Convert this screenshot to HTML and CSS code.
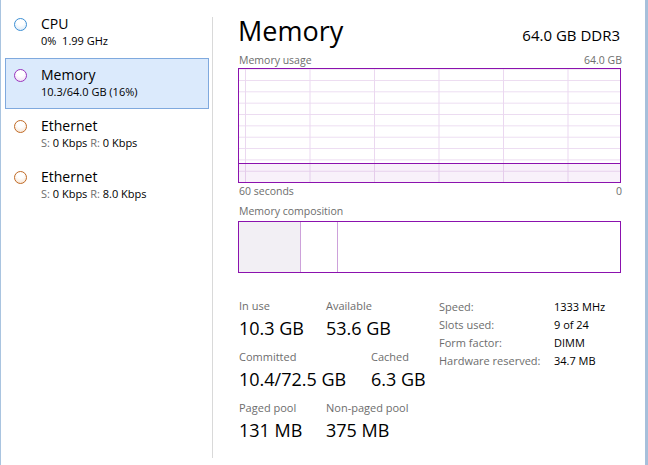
FILE: index.html
```html
<!DOCTYPE html>
<html lang="en">
<head>
    <meta charset="UTF-8">
    <title>Task Manager - Memory</title>
    <link rel="stylesheet" href="styles.css">
</head>
<body>

<div class="window">
    <div class="sidebar">
        <div class="item">
            <span class="dot dot-cpu"></span>
            <div class="item-text">
                <div class="item-title">CPU</div>
                <div class="item-sub">0%&nbsp; 1.99 GHz</div>
            </div>
        </div>
        <div class="item selected">
            <span class="dot dot-mem"></span>
            <div class="item-text">
                <div class="item-title">Memory</div>
                <div class="item-sub">10.3/64.0 GB (16%)</div>
            </div>
        </div>
        <div class="item">
            <span class="dot dot-eth"></span>
            <div class="item-text">
                <div class="item-title">Ethernet</div>
                <div class="item-sub"><span class="dim">S:</span> 0 Kbps <span class="dim">R:</span> 0 Kbps</div>
            </div>
        </div>
        <div class="item">
            <span class="dot dot-eth"></span>
            <div class="item-text">
                <div class="item-title">Ethernet</div>
                <div class="item-sub"><span class="dim">S:</span> 0 Kbps <span class="dim">R:</span> 8.0 Kbps</div>
            </div>
        </div>
    </div>

    <div class="divider"></div>

    <div class="main">
        <div class="header">
            <h1>Memory</h1>
            <div class="spec">64.0 GB DDR3</div>
        </div>

        <div class="graph-labels top">
            <span>Memory usage</span>
            <span>64.0 GB</span>
        </div>
        <div class="usage-graph">
            <div class="usage-fill"></div>
        </div>
        <div class="graph-labels under">
            <span>60 seconds</span>
            <span>0</span>
        </div>

        <div class="graph-labels comp-label">
            <span>Memory composition</span>
        </div>
        <div class="composition">
            <div class="seg seg-used"></div>
            <div class="seg seg-modified"></div>
        </div>

        <div class="stats">
            <div class="stats-left">
                <div class="row">
                    <div class="stat w87">
                        <div class="label">In use</div>
                        <div class="value">10.3 GB</div>
                    </div>
                    <div class="stat">
                        <div class="label">Available</div>
                        <div class="value">53.6 GB</div>
                    </div>
                </div>
                <div class="row">
                    <div class="stat w132">
                        <div class="label">Committed</div>
                        <div class="value">10.4/72.5 GB</div>
                    </div>
                    <div class="stat">
                        <div class="label">Cached</div>
                        <div class="value">6.3 GB</div>
                    </div>
                </div>
                <div class="row">
                    <div class="stat w87">
                        <div class="label">Paged pool</div>
                        <div class="value">131 MB</div>
                    </div>
                    <div class="stat">
                        <div class="label">Non-paged pool</div>
                        <div class="value">375 MB</div>
                    </div>
                </div>
            </div>
            <div class="stats-right">
                <div class="kv"><span class="k">Speed:</span><span class="v">1333 MHz</span></div>
                <div class="kv"><span class="k">Slots used:</span><span class="v">9 of 24</span></div>
                <div class="kv"><span class="k">Form factor:</span><span class="v">DIMM</span></div>
                <div class="kv"><span class="k">Hardware reserved:</span><span class="v">34.7 MB</span></div>
            </div>
        </div>
    </div>

    <div class="edge"></div>
</div>

</body>
</html>
```

FILE: styles.css
```css
html, body {
    margin: 0;
    padding: 0;
    background-color: #fff;
}
body {
    font-family: "Open Sans", "Noto Sans", sans-serif;
    color: #000;
}
.window {
    display: flex;
    width: 648px;
    height: 465px;
    border-left: 1px solid #a9c4e0;
    box-sizing: border-box;
    overflow: hidden;
}

/* left list */
.sidebar {
    width: 211px;
    padding-top: 7px;
    box-sizing: border-box;
}
.item {
    display: flex;
    align-items: flex-start;
    width: 204px;
    height: 51px;
    margin-left: 4px;
    box-sizing: border-box;
    border: 1px solid transparent;
    padding: 8px 0 0 8px;
}
.item.selected {
    background-color: #dbeafc;
    border-color: #7fa9de;
}
.dot {
    width: 11px;
    height: 11px;
    border-radius: 50%;
    margin-top: 2px;
    margin-right: 14px;
    flex-shrink: 0;
}
.dot-cpu {
    border: 1px solid #3d8fd4;
    background: radial-gradient(circle at 50% 25%, #fff 35%, #d3e5f6);
}
.dot-mem {
    border: 1px solid #9a35bd;
    background: radial-gradient(circle at 50% 25%, #fff 35%, #ecd6f3);
}
.dot-eth {
    border: 1px solid #c06a26;
    background: radial-gradient(circle at 50% 25%, #fff 35%, #f5dfca);
}
.item-title {
    font-size: 14px;
    line-height: 17px;
    margin-top: -1px;
}
.item-sub {
    font-size: 11px;
    line-height: 15px;
    margin-top: 1px;
}
.dim {
    color: #6d6d6d;
}

.divider {
    width: 1px;
    margin: 17px 0 7px 0;
    background-color: #d9d9d9;
}

/* right pane */
.main {
    width: 407px;
    padding: 13px 0 0 25px;
    box-sizing: border-box;
}
.header {
    display: flex;
    justify-content: space-between;
    align-items: baseline;
    width: 383px;
}
h1 {
    margin: 0;
    font-weight: normal;
    font-size: 27px;
    line-height: 36px;
}
.spec {
    font-size: 15px;
    margin-right: 1px;
}
.graph-labels {
    display: flex;
    justify-content: space-between;
    width: 383px;
    font-size: 10.5px;
    line-height: 14px;
    color: #6d6d6d;
    margin-left: 1px;
}
.graph-labels.top {
    margin-top: 4px;
}
.graph-labels.under {
    margin-top: 1px;
}
.comp-label {
    margin-top: 6px;
}
.usage-graph {
    position: relative;
    width: 383px;
    height: 115px;
    margin-top: 1px;
    box-sizing: border-box;
    border: 1px solid #8b12ae;
    background-color: #fff;
    background-image:
        linear-gradient(to right, #ebd8f0 1px, transparent 1px),
        linear-gradient(to bottom, #ecdcf1 1px, transparent 1px);
    background-size: 64.5px 100%, 100% 11.35px;
    background-position: 6px 0, 0 11px;
}
.usage-fill {
    position: absolute;
    left: 0;
    right: 0;
    bottom: 0;
    height: 18px;
    border-top: 1px solid #8b12ae;
    background-color: rgba(139, 18, 174, 0.06);
}
.composition {
    display: flex;
    width: 383px;
    height: 52px;
    margin-top: 3px;
    box-sizing: border-box;
    border: 1px solid #8b12ae;
}
.seg {
    height: 100%;
    border-right: 1px solid #cda1da;
}
.seg-used {
    width: 61px;
    background-color: #f2eff4;
}
.seg-modified {
    width: 36px;
}

/* stats */
.stats {
    display: flex;
    margin-top: 25px;
    margin-left: 1px;
}
.stats-left {
    width: 200px;
}
.row {
    display: flex;
    margin-bottom: 8px;
}
.stat.w87 {
    width: 87px;
}
.stat.w132 {
    width: 132px;
}
.label {
    font-size: 11px;
    line-height: 15px;
    color: #6d6d6d;
}
.value {
    font-size: 18px;
    line-height: 25px;
    margin-top: 3px;
}
.kv {
    display: flex;
    font-size: 11px;
    line-height: 18px;
}
.k {
    width: 115px;
    color: #6d6d6d;
}
.v {
    color: #000;
}

.edge {
    margin-left: auto;
    width: 3px;
    background-color: #a7c0db;
}
```
